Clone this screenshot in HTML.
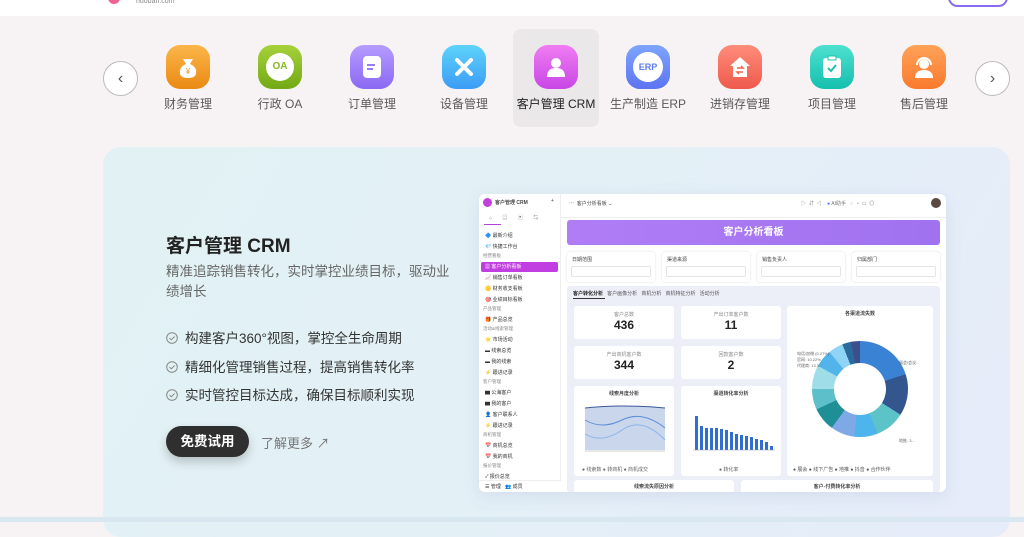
<!DOCTYPE html>
<html><head><meta charset="utf-8">
<style>
*{box-sizing:border-box;margin:0;padding:0}
body{width:1024px;height:522px;overflow:hidden;background:#f7f3f4;font-family:"Liberation Sans","Noto Sans CJK SC",sans-serif;position:relative;color:#333}
.abs{position:absolute}
.hdr{left:0;top:0;width:1024px;height:16px;background:#fff}
.nav .it{position:absolute;top:29px;width:86px;height:98px;text-align:center}
.nav .ic{position:absolute;left:21px;top:16px;width:44px;height:44px;border-radius:14px;display:flex;align-items:center;justify-content:center}
.nav .lb{position:absolute;left:-10px;right:-10px;top:66px;font-size:12px;color:#5a5a5a;text-align:center;white-space:nowrap}
.arr{width:35px;height:35px;border:1px solid #bbb;border-radius:50%;background:#fff;top:61px;display:flex;align-items:center;justify-content:center;color:#555;font-size:16px}
.card{left:103px;top:147px;width:907px;height:390px;border-radius:18px;background:linear-gradient(120deg,#e2f2f4 0%,#e3f0f6 45%,#e6ecfa 100%)}
.shot{left:479px;top:194px;width:467px;height:298px;background:#fff;border-radius:6px;box-shadow:0 4px 16px rgba(120,130,180,.15);overflow:hidden}
.s{font-size:5px;color:#444;white-space:nowrap}
.sb .r{position:absolute;left:6px;font-size:5px;color:#333;white-space:nowrap}
.sb .g{position:absolute;left:4px;font-size:4.5px;color:#888}
.wc{position:absolute;background:#fff;border-radius:3px}
.num{font-size:12px;color:#222;font-weight:bold;text-align:center}
.ck{display:inline-block;width:12px;height:12px;margin-right:7px;vertical-align:-1px}
</style></head><body>
<div class="abs hdr"></div>
<div class="abs" style="left:108px;top:-4px;width:12px;height:8px;background:#f06292;border-radius:0 0 6px 6px"></div>
<div class="abs" style="left:136px;top:-2px;font-size:7px;color:#888">huoban.com</div>
<div class="abs" style="left:948px;top:-12px;width:60px;height:19px;border:2px solid #8b6cf0;border-radius:10px;background:#fff"></div>

<div class="abs arr" style="left:103px">‹</div>
<div class="abs arr" style="left:975px">›</div>

<div class="nav">
<div class="it" style="left:513px;background:#ebe8e9;border-radius:8px"></div>
<div class="it" style="left:145px"><div class="ic" style="background:linear-gradient(#fbb54a,#ea8a13)"><svg width="22" height="24"><path d="M6 4h10l-3 5c5 2 7 6 6 10-1 3-4 4-8 4s-7-1-8-4c-1-4 1-8 6-10z" fill="#fff"/><text x="11" y="19" font-size="8" fill="#e99420" text-anchor="middle" font-family="Liberation Sans">¥</text></svg></div><div class="lb">财务管理</div></div>
<div class="it" style="left:237px"><div class="ic" style="background:linear-gradient(#a6d13b,#72a914)"><div style="width:28px;height:28px;border-radius:50%;background:#fff;color:#86b81f;font-size:10px;font-weight:bold;line-height:28px">OA</div></div><div class="lb">行政 OA</div></div>
<div class="it" style="left:329px"><div class="ic" style="background:linear-gradient(#b69bff,#8b69f3)"><div style="width:18px;height:22px;border-radius:4px;background:#fff;position:relative"><div style="position:absolute;left:4px;top:8px;width:8px;height:2px;background:#9a7bf7"></div><div style="position:absolute;left:4px;top:12px;width:6px;height:2px;background:#9a7bf7"></div></div></div><div class="lb">订单管理</div></div>
<div class="it" style="left:421px"><div class="ic" style="background:linear-gradient(#5ed3fb,#3c9cf5)"><svg width="24" height="24"><path d="M5 5l14 14M19 5L5 19" stroke="#fff" stroke-width="4" stroke-linecap="round"/></svg></div><div class="lb">设备管理</div></div>
<div class="it" style="left:513px"><div class="ic" style="background:linear-gradient(#f07df2,#c846e6)"><svg width="24" height="24"><circle cx="12" cy="8" r="5" fill="#fff"/><path d="M3 22c0-7 4-9 9-9s9 2 9 9z" fill="#fff"/></svg></div><div class="lb" style="color:#222">客户管理 CRM</div></div>
<div class="it" style="left:605px"><div class="ic" style="background:linear-gradient(#7ea4ff,#5d74f1)"><div style="width:30px;height:30px;border-radius:50%;background:#fff;color:#5d7af2;font-size:9px;font-weight:bold;line-height:30px">ERP</div></div><div class="lb">生产制造 ERP</div></div>
<div class="it" style="left:697px"><div class="ic" style="background:linear-gradient(#ff8c7a,#ee5a4c)"><svg width="24" height="24"><path d="M12 2L2 11h3v11h14V11h3z" fill="#fff"/><path d="M9 13h6l-2-2M15 17H9l2 2" stroke="#ef6352" stroke-width="1.5" fill="none"/></svg></div><div class="lb">进销存管理</div></div>
<div class="it" style="left:789px"><div class="ic" style="background:linear-gradient(#4fe0cf,#15bfae)"><svg width="22" height="24"><rect x="2" y="3" width="18" height="20" rx="3" fill="#fff"/><rect x="7" y="1" width="8" height="4" rx="1" fill="#fff" stroke="#1cc3b2"/><path d="M7 13l3 3 5-6" stroke="#1cc3b2" stroke-width="2" fill="none"/></svg></div><div class="lb">项目管理</div></div>
<div class="it" style="left:881px"><div class="ic" style="background:linear-gradient(#ffa25a,#fa7a2c)"><svg width="24" height="24"><circle cx="12" cy="9" r="5" fill="#fff"/><path d="M5 10a7 7 0 0114 0" stroke="#fff" stroke-width="2" fill="none"/><path d="M3 23c0-6 4-8 9-8s9 2 9 8z" fill="#fff"/></svg></div><div class="lb">售后管理</div></div>
</div>

<div class="abs card"></div>
<div class="abs" style="left:0;top:517px;width:1024px;height:5px;background:#d9e8f0"></div>
<div class="abs" style="left:166px;top:231px;font-size:19px;font-weight:bold;color:#222">客户管理 CRM</div>
<div class="abs" style="left:166px;top:262px;width:290px;font-size:13.5px;line-height:20px;color:#666">精准追踪销售转化，实时掌控业绩目标，驱动业绩增长</div>
<div class="abs" style="left:166px;top:325px;font-size:13.5px;line-height:28.5px;color:#333">
<div><svg class="ck" viewBox="0 0 12 12"><circle cx="6" cy="6" r="5.3" fill="none" stroke="#888"/><path d="M3.5 6l1.8 1.8L8.6 4.5" stroke="#888" fill="none"/></svg>构建客户360°视图，掌控全生命周期</div>
<div><svg class="ck" viewBox="0 0 12 12"><circle cx="6" cy="6" r="5.3" fill="none" stroke="#888"/><path d="M3.5 6l1.8 1.8L8.6 4.5" stroke="#888" fill="none"/></svg>精细化管理销售过程，提高销售转化率</div>
<div><svg class="ck" viewBox="0 0 12 12"><circle cx="6" cy="6" r="5.3" fill="none" stroke="#888"/><path d="M3.5 6l1.8 1.8L8.6 4.5" stroke="#888" fill="none"/></svg>实时管控目标达成，确保目标顺利实现</div>
</div>
<div class="abs" style="left:166px;top:426px;width:83px;height:31px;border-radius:16px;background:#2f2f2f;color:#fff;font-size:13.5px;font-weight:bold;line-height:31px;text-align:center;box-shadow:0 5px 10px rgba(0,0,0,.2)">免费试用</div>
<div class="abs" style="left:261px;top:433px;font-size:13px;color:#777">了解更多 ↗</div>

<div class="abs shot">
 <div class="sb abs" style="left:0;top:0;width:82px;height:298px;border-right:1px solid #eee">
  <div class="abs" style="left:4px;top:4px;width:9px;height:9px;border-radius:50%;background:#c23fe0"></div>
  <div class="abs s" style="left:16px;top:5px;font-weight:bold">客户管理 CRM</div>
  <div class="abs s" style="left:72px;top:4px">+</div>
  <div class="abs s" style="left:10px;top:20px;color:#888;word-spacing:9px">⌂ ▤ ▣ ⇆</div>
  <div class="abs" style="left:5px;top:30px;width:17px;height:1px;background:#b43fdc"></div>
  <div class="r" style="top:38px">🔷 最新介绍</div>
  <div class="r" style="top:49px">💎 快捷工作台</div>
  <div class="g" style="top:59px">经营看板</div>
  <div class="abs" style="left:2px;top:68px;width:77px;height:10px;border-radius:2px;background:#c13ee0"></div>
  <div class="r" style="top:69px;color:#fff">▦ 客户分析看板</div>
  <div class="r" style="top:80px">📈 销售订单看板</div>
  <div class="r" style="top:91px">🟡 财务收支看板</div>
  <div class="r" style="top:102px">🎯 业绩目标看板</div>
  <div class="g" style="top:112px">产品管理</div>
  <div class="r" style="top:122px">🎁 产品总览</div>
  <div class="g" style="top:132px">活动&线索管理</div>
  <div class="r" style="top:142px">⭐ 市场活动</div>
  <div class="r" style="top:153px">▬ 线索总览</div>
  <div class="r" style="top:164px">▬ 我的线索</div>
  <div class="r" style="top:175px">⚡ 跟进记录</div>
  <div class="g" style="top:185px">客户管理</div>
  <div class="r" style="top:195px">▆ 公海客户</div>
  <div class="r" style="top:206px">▆ 我的客户</div>
  <div class="r" style="top:217px">👤 客户联系人</div>
  <div class="r" style="top:228px">⚡ 跟进记录</div>
  <div class="g" style="top:238px">商机管理</div>
  <div class="r" style="top:248px">📅 商机总览</div>
  <div class="r" style="top:259px">📅 我的商机</div>
  <div class="g" style="top:269px">报价管理</div>
  <div class="r" style="top:279px">✓ 报价总览</div>
  <div class="abs" style="left:0;top:286px;width:82px;height:12px;background:#fff;border-top:1px solid #eee"></div>
  <div class="r" style="top:289px">☰ 管理 &nbsp; 👥 成员</div>
 </div>
 <div class="abs s" style="left:90px;top:6px">⋯ &nbsp;客户分析看板 ⌄</div>
 <div class="abs s" style="left:322px;top:6px;color:#777">▷ &nbsp;⇵ &nbsp;◁ &nbsp; &nbsp;<span style="color:#5b6de8">●</span> AI助手 &nbsp; ◌ &nbsp;◔ &nbsp;▭ &nbsp;◎</div>
 <div class="abs" style="left:452px;top:4px;width:10px;height:10px;border-radius:50%;background:#5a4a40"></div>
 <div class="abs" style="left:82px;top:23px;width:385px;height:1px;background:#eee"></div>
 <div class="abs" style="left:88px;top:26px;width:373px;height:25px;border-radius:3px;background:linear-gradient(90deg,#b07df5,#a072f0);color:#fff;font-size:10px;text-align:center;line-height:25px;font-weight:bold">客户分析看板</div>
 <div class="abs" style="left:88px;top:58px;width:373px;height:30px">
  <div class="abs" style="left:0;top:0;width:88px;height:30px;border-radius:3px;box-shadow:0 0 2px #ddd"><div class="abs s" style="left:5px;top:4px">日期范围</div><div class="abs" style="left:4px;top:14px;width:80px;height:11px;border:1px solid #e5e5e5;border-radius:2px"></div></div>
  <div class="abs" style="left:95px;top:0;width:88px;height:30px;border-radius:3px;box-shadow:0 0 2px #ddd"><div class="abs s" style="left:5px;top:4px">渠道来源</div><div class="abs" style="left:4px;top:14px;width:80px;height:11px;border:1px solid #e5e5e5;border-radius:2px"></div></div>
  <div class="abs" style="left:190px;top:0;width:88px;height:30px;border-radius:3px;box-shadow:0 0 2px #ddd"><div class="abs s" style="left:5px;top:4px">销售负责人</div><div class="abs" style="left:4px;top:14px;width:80px;height:11px;border:1px solid #e5e5e5;border-radius:2px"></div></div>
  <div class="abs" style="left:285px;top:0;width:88px;height:30px;border-radius:3px;box-shadow:0 0 2px #ddd"><div class="abs s" style="left:5px;top:4px">归属部门</div><div class="abs" style="left:4px;top:14px;width:80px;height:11px;border:1px solid #e5e5e5;border-radius:2px"></div></div>
 </div>
 <div class="abs" style="left:88px;top:92px;width:373px;height:206px;background:#eceef8;border-radius:3px"></div>
 <div class="abs s" style="left:94px;top:96px;font-weight:bold;color:#222">客户转化分析 &nbsp; <span style="font-weight:normal;color:#555">客户画像分析 &nbsp; 商机分析 &nbsp; 商机特征分析 &nbsp; 活动分析</span></div>
 <div class="abs" style="left:94px;top:104px;width:32px;height:1px;background:#333"></div>
 <div class="wc" style="left:95px;top:112px;width:100px;height:33px"><div class="s" style="text-align:center;margin-top:5px;color:#888">客户总数</div><div class="num">436</div></div>
 <div class="wc" style="left:202px;top:112px;width:100px;height:33px"><div class="s" style="text-align:center;margin-top:5px;color:#888">产出订单客户数</div><div class="num">11</div></div>
 <div class="wc" style="left:95px;top:152px;width:100px;height:33px"><div class="s" style="text-align:center;margin-top:5px;color:#888">产出商机客户数</div><div class="num">344</div></div>
 <div class="wc" style="left:202px;top:152px;width:100px;height:33px"><div class="s" style="text-align:center;margin-top:5px;color:#888">回款客户数</div><div class="num">2</div></div>
 <div class="wc" style="left:95px;top:192px;width:100px;height:90px"><div class="s" style="text-align:center;margin-top:4px;font-weight:bold">线索月度分析</div>
  <svg class="abs" style="left:8px;top:18px" width="86" height="60"><path d="M3 4Q40 0 83 4V46H3Z" fill="#c9d6ec"/><path d="M3 4Q40 0 83 4" stroke="#3a5a9a" fill="none"/><path d="M3 16Q20 26 40 16T83 24" stroke="#5d8fd6" fill="none"/><path d="M3 30Q20 40 40 26T83 36" stroke="#8ab6ea" fill="none"/><line x1="3" y1="47" x2="83" y2="47" stroke="#999" stroke-width=".5"/></svg>
  <div class="abs s" style="left:8px;top:80px;color:#666">● 线索数 ● 转商机 ● 商机成交</div></div>
 <div class="wc" style="left:202px;top:192px;width:100px;height:90px"><div class="s" style="text-align:center;margin-top:4px;font-weight:bold">渠道转化率分析</div>
  <svg class="abs" style="left:8px;top:18px" width="90" height="60"><g fill="#2f6fd1"><rect x="6" y="12" width="3" height="34"/><rect x="11" y="22" width="3" height="24"/><rect x="16" y="24" width="3" height="22"/><rect x="21" y="24" width="3" height="22"/><rect x="26" y="24" width="3" height="22"/><rect x="31" y="25" width="3" height="21"/><rect x="36" y="26" width="3" height="20"/><rect x="41" y="28" width="3" height="18"/><rect x="46" y="30" width="3" height="16"/><rect x="51" y="31" width="3" height="15"/><rect x="56" y="32" width="3" height="14"/><rect x="61" y="33" width="3" height="13"/><rect x="66" y="35" width="3" height="11"/><rect x="71" y="36" width="3" height="10"/><rect x="76" y="38" width="3" height="8"/><rect x="81" y="42" width="3" height="4"/></g><line x1="4" y1="46" x2="86" y2="46" stroke="#999" stroke-width=".5"/></svg>
  <div class="abs s" style="left:38px;top:80px;color:#666">● 转化率</div></div>
 <div class="wc" style="left:308px;top:112px;width:146px;height:170px"><div class="s" style="text-align:center;margin-top:4px;font-weight:bold">各渠道流失数</div>
  <div class="abs" style="left:25px;top:35px;width:96px;height:96px;border-radius:50%;background:conic-gradient(#3a82d4 0 20%,#33568f 0 34%,#5cc3c9 0 44%,#4eb4ec 0 52%,#7fa8e6 0 60%,#1e8f95 0 68%,#5cbfca 0 75%,#9fdde8 0 83%,#52b4ea 0 89%,#8fd4f5 0 94%,#2b6a9c 0 97%,#3c4f8a 0 100%)"><div style="position:absolute;left:22px;top:22px;width:52px;height:52px;border-radius:50%;background:#fff"></div></div>
  <div class="abs s" style="left:10px;top:45px;color:#666;font-size:4px">电话/加微 (0.27%)<br>官网: 10.22%<br>代理商: 13.3...</div>
  <div class="abs s" style="left:112px;top:54px;color:#666;font-size:4px">展会/会议...</div>
  <div class="abs s" style="left:112px;top:132px;color:#666;font-size:4px">地推: 3...</div>
  <div class="abs s" style="left:6px;top:160px;color:#555">● 展会 ● 线下广告 ● 地推 ● 抖音 ● 合作伙伴</div></div>
 <div class="wc" style="left:95px;top:286px;width:160px;height:20px"><div class="s" style="text-align:center;margin-top:3px;font-weight:bold">线索流失原因分析</div></div>
 <div class="wc" style="left:262px;top:286px;width:192px;height:20px"><div class="s" style="text-align:center;margin-top:3px;font-weight:bold">客户-付费转化率分析</div></div>
</div>
</body></html>
